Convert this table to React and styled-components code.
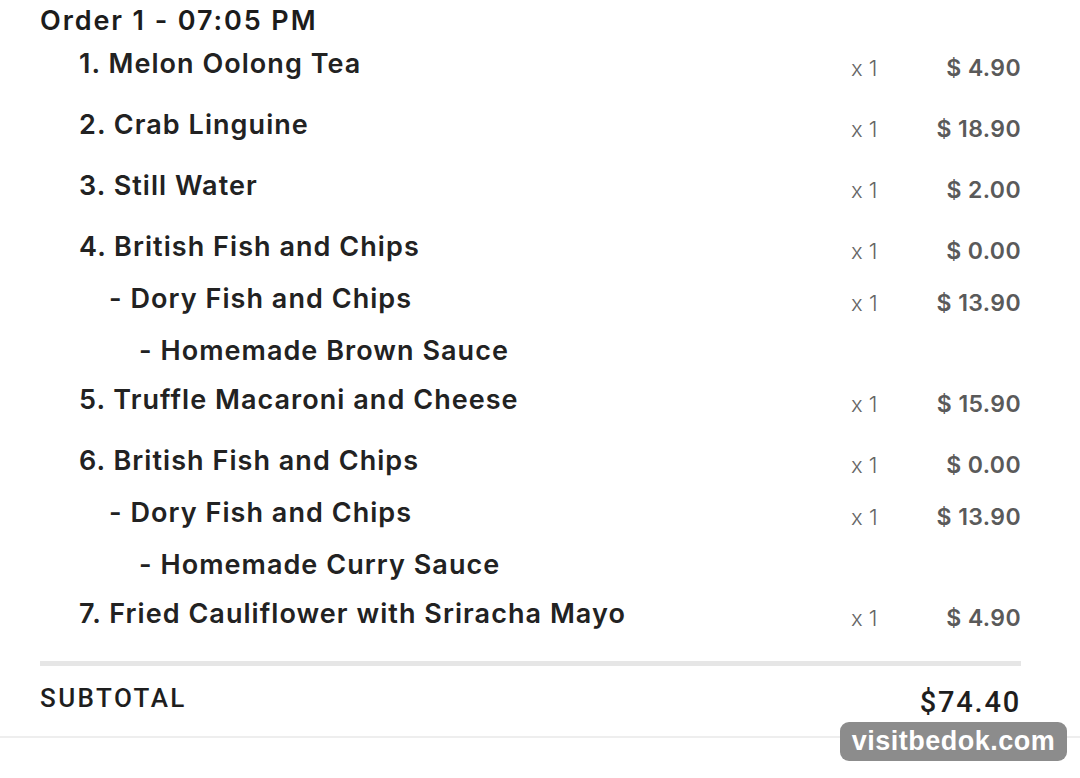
import styled, { createGlobalStyle } from "styled-components";

const GlobalStyle = createGlobalStyle`
  html, body {
    margin: 0;
    padding: 0;
    background: #ffffff;
  }
  body {
    font-family: "Inter", "Open Sans", sans-serif;
    color: #222222;
  }
`;

const items = [
  { no: 1, name: "Melon Oolong Tea", qty: 1, price: "4.90" },
  { no: 2, name: "Crab Linguine", qty: 1, price: "18.90" },
  { no: 3, name: "Still Water", qty: 1, price: "2.00" },
  {
    no: 4,
    name: "British Fish and Chips",
    qty: 1,
    price: "0.00",
    subs: [
      { name: "Dory Fish and Chips", qty: 1, price: "13.90", level: 1 },
      { name: "Homemade Brown Sauce", level: 2 },
    ],
  },
  { no: 5, name: "Truffle Macaroni and Cheese", qty: 1, price: "15.90" },
  {
    no: 6,
    name: "British Fish and Chips",
    qty: 1,
    price: "0.00",
    subs: [
      { name: "Dory Fish and Chips", qty: 1, price: "13.90", level: 1 },
      { name: "Homemade Curry Sauce", level: 2 },
    ],
  },
  { no: 7, name: "Fried Cauliflower with Sriracha Mayo", qty: 1, price: "4.90" },
];

export default function App() {
  return (
    <>
      <GlobalStyle />
      <Page>
        <Card>
          <OrderTitle>Order 1 - 07:05 PM</OrderTitle>
          <ItemList>
            {items.map((item) => (
              <ItemGroup key={item.no}>
                <Line>
                  <Name level={0}>
                    {item.no}. {item.name}
                  </Name>
                  <Qty>x 1</Qty>
                  <Price>$ {item.price}</Price>
                </Line>
                {item.subs &&
                  item.subs.map((s) => (
                    <Line key={s.name} short={!s.price}>
                      <Name level={s.level}>- {s.name}</Name>
                      {s.price && (
                        <>
                          <Qty>x {s.qty}</Qty>
                          <Price>$ {s.price}</Price>
                        </>
                      )}
                    </Line>
                  ))}
              </ItemGroup>
            ))}
          </ItemList>
          <Divider />
          <SubtotalRow>
            <SubtotalLabel>SUBTOTAL</SubtotalLabel>
            <SubtotalValue>$74.40</SubtotalValue>
          </SubtotalRow>
        </Card>
        <BottomRule />
        <Watermark>visitbedok.com</Watermark>
      </Page>
    </>
  );
}

const Page = styled.div`
  position: relative;
  width: 1080px;
  height: 778px;
  overflow: hidden;
`;

const Card = styled.div`
  padding: 0 59px 0 40px;
  display: flex;
  flex-direction: column;
`;

const OrderTitle = styled.div`
  height: 40px;
  line-height: 42px;
  font-size: 27px;
  font-weight: 600;
  color: #1c1c1c;
  letter-spacing: 1.9px;
`;

const ItemList = styled.div`
  margin-top: 7px;
  display: flex;
  flex-direction: column;
`;

const ItemGroup = styled.div`
  padding-bottom: 9px;
`;

const Line = styled.div`
  display: flex;
  align-items: flex-start;
  height: ${(p) => (p.short ? "40px" : "52px")};
`;

const Name = styled.div`
  flex: 1;
  padding-left: ${(p) => 39 + p.level * 30}px;
  line-height: 34px;
  font-size: 27px;
  font-weight: 600;
  color: #222222;
  letter-spacing: 1.05px;
  white-space: nowrap;
`;

const Qty = styled.div`
  width: 80px;
  margin-top: 4px;
  line-height: 34px;
  font-size: 22px;
  font-weight: 300;
  color: #666666;
`;

const Price = styled.div`
  width: 90px;
  margin-top: 4px;
  line-height: 34px;
  text-align: right;
  font-size: 23px;
  font-weight: 600;
  color: #5a5a5a;
  letter-spacing: 0.4px;
`;

const Divider = styled.div`
  margin-top: 3px;
  height: 5px;
  background: #e6e6e6;
`;

const SubtotalRow = styled.div`
  display: flex;
  justify-content: space-between;
  align-items: center;
  height: 70px;
`;

const SubtotalLabel = styled.div`
  font-family: "Roboto", "Liberation Sans", sans-serif;
  font-size: 26px;
  font-weight: 500;
  color: #1e1e1e;
  letter-spacing: 2.4px;
  margin-top: -6px;
`;

const SubtotalValue = styled.div`
  font-family: "Roboto", "Liberation Sans", sans-serif;
  font-size: 29px;
  font-weight: 500;
  color: #1e1e1e;
  letter-spacing: 1.8px;
  margin-top: 2px;
`;

const BottomRule = styled.div`
  height: 2px;
  background: #eeeeee;
`;

const Watermark = styled.div`
  position: absolute;
  left: 840px;
  top: 722px;
  width: 227px;
  height: 39px;
  border-radius: 9px;
  background: #8c8c8c;
  color: #ffffff;
  font-family: "Liberation Sans", Arial, sans-serif;
  font-weight: 700;
  font-size: 27px;
  line-height: 39px;
  text-align: center;
  letter-spacing: 0.5px;
`;
